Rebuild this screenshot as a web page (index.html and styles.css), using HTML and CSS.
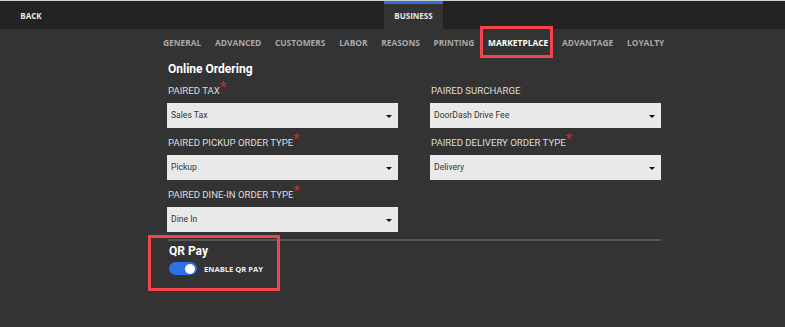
FILE: index.html
```html
<!DOCTYPE html>
<html lang="en">
<head>
  <meta charset="UTF-8">
  <title>Business Settings - Marketplace</title>
  <link rel="stylesheet" href="styles.css">
</head>
<body>
  <div class="topbar">
    <a class="back">BACK</a>
    <div class="tab active">BUSINESS</div>
  </div>

  <nav class="subnav">
    <span>GENERAL</span>
    <span>ADVANCED</span>
    <span>CUSTOMERS</span>
    <span>LABOR</span>
    <span>REASONS</span>
    <span>PRINTING</span>
    <span class="current callout">MARKETPLACE</span>
    <span>ADVANTAGE</span>
    <span>LOYALTY</span>
  </nav>

  <div class="content">
    <h3>Online Ordering</h3>
    <div class="grid">
      <div class="field">
        <label>PAIRED TAX<span class="req">*</span></label>
        <div class="select">Sales Tax</div>
      </div>
      <div class="field">
        <label>PAIRED SURCHARGE</label>
        <div class="select">DoorDash Drive Fee</div>
      </div>
      <div class="field">
        <label>PAIRED PICKUP ORDER TYPE<span class="req">*</span></label>
        <div class="select">Pickup</div>
      </div>
      <div class="field">
        <label>PAIRED DELIVERY ORDER TYPE<span class="req">*</span></label>
        <div class="select">Delivery</div>
      </div>
      <div class="field">
        <label>PAIRED DINE-IN ORDER TYPE<span class="req">*</span></label>
        <div class="select">Dine In</div>
      </div>
    </div>

    <div class="divider"></div>

    <div class="qr">
      <h3>QR Pay</h3>
      <div class="toggle-row">
        <span class="toggle on"><span class="knob"></span></span>
        <span class="toggle-label">ENABLE QR PAY</span>
      </div>
    </div>
  </div>
</body>
</html>
```

FILE: styles.css
```css
body { margin: 0; background: #333; font-family: Roboto, "Liberation Sans", sans-serif; color: #ddd; }

.topbar { height: 28px; background: #232323; border-top: 1px solid #cfcfcf; display: flex; align-items: stretch; }
.back { width: 62px; display: flex; align-items: center; justify-content: center; font-family: "Open Sans", sans-serif; font-weight: 700; font-size: 8px; color: #e8e8e8; }
.tab { margin-left: 322px; width: 59px; display: flex; align-items: center; justify-content: center; font-family: "Open Sans", sans-serif; font-weight: 700; font-size: 8px; color: #e8e8e8; }
.tab.active { background: #333; border-top: 3px solid #2f6fe0; box-sizing: border-box; padding-bottom: 3px; padding-top: 1px; }

.subnav { height: 27px; display: flex; align-items: center; gap: 13.7px; padding-left: 163px; font-family: "Open Sans", sans-serif; font-weight: 700; font-size: 8.4px; color: #a8a8a8; }
.subnav .current { color: #fff; }
.callout { position: relative; }
.callout::after { content: ""; position: absolute; left: -8px; right: -5px; top: -11px; bottom: -10px; border: 3px solid #f2444a; }

.content { width: 494px; margin-left: 167px; padding-top: 5px; }
h3 { margin: 0; font-size: 12px; font-weight: 700; color: #fff; line-height: 16px; padding-left: 1px; }

.grid { display: grid; grid-template-columns: 231px 231px; column-gap: 32px; margin-top: 7px; }
.field { margin-bottom: 8px; }
.field label { display: block; font-size: 9.6px; line-height: 14px; color: #ddd; margin-bottom: 5px; padding-left: 1px; }
.req { color: #d8262b; font-size: 15px; line-height: 0; vertical-align: 2px; }
.select { position: relative; height: 25px; background: #e9e9e9; color: #333; font-size: 8.6px; line-height: 25px; padding-left: 4px; }
.select::after { content: ""; position: absolute; right: 6px; top: 12px; border-left: 3px solid transparent; border-right: 3px solid transparent; border-top: 3px solid #111; }

.divider { height: 2px; background: #555; margin-top: -1px; margin-left: 1px; }

.qr { width: 132px; height: 56px; box-sizing: border-box; margin: -6px 0 0 -19px; border: 3px solid #f2444a; padding: 5px 0 0 17px; }
.toggle-row { display: flex; align-items: center; gap: 7px; margin-top: 3px; padding-left: 1px; }
.toggle { width: 28px; height: 13px; border-radius: 7px; background: #2f6fe8; position: relative; }
.toggle .knob { position: absolute; right: 2px; top: 1.5px; width: 10px; height: 10px; border-radius: 50%; background: #fff; }
.toggle-label { font-family: "Open Sans", sans-serif; font-weight: 700; font-size: 7.6px; color: #eee; }
```
